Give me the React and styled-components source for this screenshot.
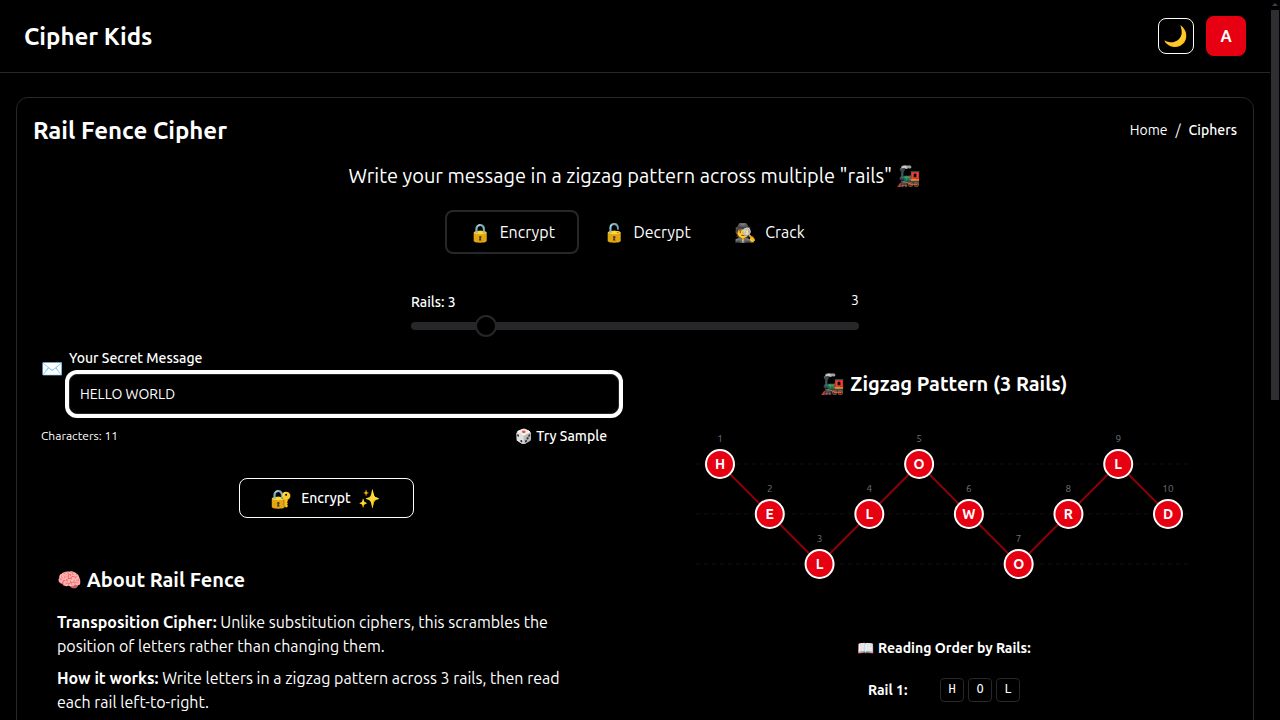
import React from "react";
import styled, { createGlobalStyle } from "styled-components";

const Global = createGlobalStyle`
  html { background: #000; }
  body {
    margin: 0;
    overflow: hidden;
    background: #000;
    color: #fff;
    font-family: Ubuntu, Lato, "Noto Sans", "Noto Color Emoji", sans-serif;
    font-size: 16px;
    line-height: 24px;
  }
  * { box-sizing: border-box; }
`;

const Shell = styled.div`
  display: flex;
  height: 100vh;
  background: #000;
`;
const Page = styled.div`
  flex: 1;
  min-width: 0;
  overflow-y: auto;
  background: #000;
`;
const ScrollRail = styled.div`
  flex: none;
  display: flex;
  flex-direction: column;
  align-items: center;
  width: 10px;
`;
const ScrollArrow = styled.div`
  width: 0;
  height: 0;
  margin: 3px 0 4px;
  border-left: 3px solid transparent;
  border-right: 3px solid transparent;
  border-bottom: 3px solid #3f3f46;
`;
const ScrollThumb = styled.div`
  width: 8px;
  height: 390px;
  background: #2e2e33;
`;
const Header = styled.header`
  display: flex;
  align-items: center;
  justify-content: space-between;
  height: 73px;
  padding: 0 24px;
  border-bottom: 1px solid #27272a;
`;
const Brand = styled.h1`
  margin: 2px 0 0;
  font-size: 24px;
  line-height: 32px;
  font-weight: 600;
`;
const HeaderActions = styled.div`
  display: flex;
  align-items: center;
  gap: 12px;
`;
const ThemeToggle = styled.button`
  width: 36px;
  height: 36px;
  padding: 0;
  border: 1px solid #fff;
  border-radius: 8px;
  background: #000;
  font-size: 20px;
  line-height: 1;
  font-family: inherit;
`;
const Avatar = styled.div`
  display: flex;
  align-items: center;
  justify-content: center;
  width: 40px;
  height: 40px;
  border-radius: 8px;
  background: #e60012;
  font-weight: 700;
`;
const Main = styled.main`
  padding: 24px 16px 32px;
`;
const Card = styled.section`
  padding: 16px;
  border: 1px solid #27272a;
  border-radius: 12px;
`;
const TitleRow = styled.div`
  display: flex;
  align-items: center;
  justify-content: space-between;
  height: 34px;
`;
const Title = styled.h2`
  margin: 0;
  font-size: 24px;
  line-height: 32px;
  font-weight: 600;
`;
const Crumbs = styled.nav`
  display: flex;
  gap: 8px;
  margin-bottom: 2px;
  font-size: 14px;
  line-height: 20px;
`;
const CrumbCurrent = styled.span`
  font-weight: 500;
`;
const Subtitle = styled.p`
  margin: 14px 0 20px;
  text-align: center;
  font-size: 20px;
  line-height: 28px;
`;
const Tabs = styled.div`
  display: flex;
  justify-content: center;
  padding-left: 4px;
`;
const Tab = styled.button`
  display: flex;
  align-items: center;
  gap: 8px;
  height: 44px;
  margin-left: ${(p) => (p.$tight ? "-4px" : "0")};
  padding: 0 22px;
  border: 2px solid ${(p) => (p.$active ? "#27272a" : "transparent")};
  border-radius: 8px;
  background: transparent;
  color: #fff;
  font-family: inherit;
  font-size: 16px;
`;
const TabIcon = styled.span`
  font-size: 18px;
`;
const SliderBlock = styled.div`
  width: 448px;
  margin: 38px auto 0;
`;
const SliderLabels = styled.div`
  display: flex;
  justify-content: space-between;
  font-size: 14px;
  line-height: 20px;
`;
const SliderName = styled.span`
  font-weight: 500;
`;
const SliderValue = styled.span`
  margin-top: -2px;
`;
const Track = styled.div`
  position: relative;
  height: 8px;
  margin-top: 10px;
  border-radius: 4px;
  background: #27272a;
`;
const Thumb = styled.div`
  position: absolute;
  top: -7px;
  left: 64px;
  width: 22px;
  height: 22px;
  border: 2px solid #27272a;
  border-radius: 50%;
  background: #000;
`;
const Columns = styled.div`
  display: grid;
  grid-template-columns: 1fr 1fr;
  gap: 32px;
  margin-top: 18px;
`;
const LeftCol = styled.div`
  min-width: 0;
`;
const MessageRow = styled.div`
  display: flex;
  gap: 6px;
  padding-left: 8px;
`;
const MessageIcon = styled.span`
  width: 22px;
  margin-top: 8px;
  font-size: 18px;
  line-height: 24px;
`;
const MessageField = styled.div`
  flex: 1;
`;
const FieldLabel = styled.label`
  display: block;
  margin-bottom: 6px;
  font-size: 14px;
  line-height: 20px;
  font-weight: 500;
`;
const MessageInput = styled.input`
  display: block;
  width: 100%;
  height: 40px;
  padding: 0 10px;
  border: 1px solid #27272a;
  border-radius: 8px;
  outline: 0;
  box-shadow: 0 0 0 4px #fff;
  background: #000;
  color: #fff;
  font-family: inherit;
  font-size: 14px;
`;
const MetaRow = styled.div`
  display: flex;
  align-items: center;
  justify-content: space-between;
  margin: 12px 8px 0;
  line-height: 20px;
`;
const CharCount = styled.span`
  font-size: 12px;
`;
const SampleButton = styled.button`
  padding: 0 4px;
  border: 0;
  background: transparent;
  color: #fff;
  font-family: inherit;
  font-size: 14px;
  line-height: 20px;
  font-weight: 500;
`;
const ActionWrap = styled.div`
  display: flex;
  justify-content: center;
  margin: 32px 8px 0;
`;
const ActionButton = styled.button`
  display: flex;
  align-items: center;
  justify-content: center;
  gap: 8px;
  width: 175px;
  height: 40px;
  border: 1px solid #fff;
  border-radius: 8px;
  background: #000;
  color: #fff;
  font-family: inherit;
  font-size: 14px;
  font-weight: 500;
`;
const ActionIcon = styled.span`
  font-size: 18px;
`;
const About = styled.article`
  margin: 32px 8px 0;
  padding: 16px;
`;
const AboutHeading = styled.h3`
  margin: 0 0 16px;
  font-size: 20px;
  line-height: 28px;
  font-weight: 600;
`;
const AboutText = styled.p`
  margin: 0 0 8px;
  font-size: 16px;
  line-height: 24px;
  strong { font-weight: 600; }
`;
const RightCol = styled.div`
  min-width: 0;
  padding-top: 22px;
`;
const ChartHeading = styled.h3`
  margin: 0;
  text-align: center;
  font-size: 20px;
  line-height: 28px;
  font-weight: 600;
`;
const Chart = styled.svg`
  display: block;
  width: 496px;
  height: 200px;
  margin: 26px auto 0;
`;
const NodeLetter = styled.text`
  fill: #fff;
  font-size: 14px;
  font-weight: 700;
  text-anchor: middle;
`;
const NodeIndex = styled.text`
  fill: #71717a;
  font-size: 10px;
  text-anchor: middle;
`;
const ReadingHeading = styled.h4`
  margin: 14px 0 20px;
  text-align: center;
  font-size: 14px;
  line-height: 20px;
  font-weight: 600;
`;
const RailList = styled.div`
  display: flex;
  flex-direction: column;
  align-items: center;
  gap: 20px;
`;
const RailRow = styled.div`
  display: flex;
  align-items: center;
`;
const RailName = styled.span`
  flex: none;
  width: 72px;
  font-size: 14px;
  line-height: 20px;
  font-weight: 600;
`;
const RailLetters = styled.div`
  display: flex;
  gap: 4px;
`;
const RailLetter = styled.span`
  display: flex;
  align-items: center;
  justify-content: center;
  width: 24px;
  height: 24px;
  padding-bottom: 2px;
  border: 1px solid #27272a;
  border-radius: 4px;
  font-family: "DejaVu Sans Mono", monospace;
  font-size: 12px;
`;

const text = "HELLOWORLD".split("");
const railY = [40, 90, 140];
const pattern = [0, 1, 2, 1, 0, 1, 2, 1, 0, 1];
const nodes = text.map((ch, i) => ({
  ch,
  i,
  x: 24 + (i * 448) / 9,
  y: railY[pattern[i]],
}));
const rails = [
  ["H", "O", "L"],
  ["E", "L", "W", "R", "D"],
  ["L", "O"],
];

export default function App() {
  return (
    <Shell>
      <Global />
      <Page>
        <Header>
          <Brand>Cipher Kids</Brand>
          <HeaderActions>
            <ThemeToggle>🌙</ThemeToggle>
            <Avatar>A</Avatar>
          </HeaderActions>
        </Header>
        <Main>
          <Card>
            <TitleRow>
              <Title>Rail Fence Cipher</Title>
              <Crumbs>
                <span>Home</span>
                <span>/</span>
                <CrumbCurrent>Ciphers</CrumbCurrent>
              </Crumbs>
            </TitleRow>
            <Subtitle>Write your message in a zigzag pattern across multiple "rails" 🚂</Subtitle>
            <Tabs>
              <Tab $active><TabIcon>🔒</TabIcon>Encrypt</Tab>
              <Tab><TabIcon>🔓</TabIcon>Decrypt</Tab>
              <Tab $tight><TabIcon>🕵️</TabIcon>Crack</Tab>
            </Tabs>
            <SliderBlock>
              <SliderLabels>
                <SliderName>Rails: 3</SliderName>
                <SliderValue>3</SliderValue>
              </SliderLabels>
              <Track><Thumb /></Track>
            </SliderBlock>
            <Columns>
              <LeftCol>
                <MessageRow>
                  <MessageIcon>✉️</MessageIcon>
                  <MessageField>
                    <FieldLabel>Your Secret Message</FieldLabel>
                    <MessageInput defaultValue="HELLO WORLD" />
                  </MessageField>
                </MessageRow>
                <MetaRow>
                  <CharCount>Characters: 11</CharCount>
                  <SampleButton>🎲 Try Sample</SampleButton>
                </MetaRow>
                <ActionWrap>
                  <ActionButton>
                    <ActionIcon>🔐</ActionIcon>
                    Encrypt
                    <ActionIcon>✨</ActionIcon>
                  </ActionButton>
                </ActionWrap>
                <About>
                  <AboutHeading>🧠 About Rail Fence</AboutHeading>
                  <AboutText>
                    <strong>Transposition Cipher:</strong> Unlike substitution ciphers, this scrambles the position of letters rather than changing them.
                  </AboutText>
                  <AboutText>
                    <strong>How it works:</strong> Write letters in a zigzag pattern across 3 rails, then read each rail left-to-right.
                  </AboutText>
                </About>
              </LeftCol>
              <RightCol>
                <ChartHeading>🚂 Zigzag Pattern (3 Rails)</ChartHeading>
                <Chart viewBox="0 0 496 200">
                  {railY.map((y) => (
                    <line key={y} x1="0" x2="496" y1={y} y2={y} stroke="#27272a" strokeOpacity="0.4" strokeDasharray="4 4" />
                  ))}
                  {nodes.slice(1).map((n, k) => (
                    <line key={n.i} x1={nodes[k].x} y1={nodes[k].y} x2={n.x} y2={n.y} stroke="#8b0009" strokeWidth="2" />
                  ))}
                  {nodes.map((n) => (
                    <g key={n.i}>
                      <NodeIndex x={n.x} y={n.y - 22}>{n.i + 1}</NodeIndex>
                      <circle cx={n.x} cy={n.y} r="14" fill="#e60012" stroke="#fff" strokeWidth="2" />
                      <NodeLetter x={n.x} y={n.y + 5}>{n.ch}</NodeLetter>
                    </g>
                  ))}
                </Chart>
                <ReadingHeading>📖 Reading Order by Rails:</ReadingHeading>
                <RailList>
                  {rails.map((letters, r) => (
                    <RailRow key={r}>
                      <RailName>Rail {r + 1}:</RailName>
                      <RailLetters>
                        {letters.map((l, i) => (
                          <RailLetter key={i}>{l}</RailLetter>
                        ))}
                      </RailLetters>
                    </RailRow>
                  ))}
                </RailList>
              </RightCol>
            </Columns>
          </Card>
        </Main>
      </Page>
      <ScrollRail>
        <ScrollArrow />
        <ScrollThumb />
      </ScrollRail>
    </Shell>
  );
}
